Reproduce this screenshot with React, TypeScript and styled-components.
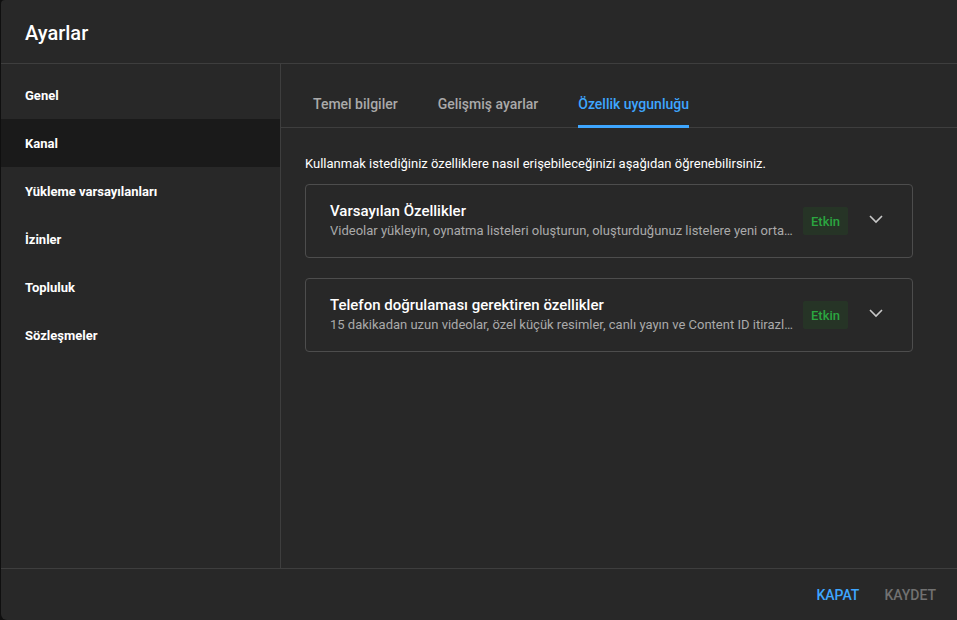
import React, { useState } from "react";
import styled, { createGlobalStyle } from "styled-components";

const GlobalStyle = createGlobalStyle`
  html, body {
    margin: 0;
    padding: 0;
    background: #0f0f0f;
    font-family: Roboto, "Noto Sans", Arial, sans-serif;
  }
  #root {
    height: 620px;
    overflow: hidden;
  }
`;

const Dialog = styled.div`
  margin-left: 1px;
  height: 620px;
  background: #282828;
  border-radius: 4px 0 0 6px;
  display: flex;
  flex-direction: column;
  color: #f1f1f1;
`;

const Header = styled.div`
  height: 61px;
  flex-shrink: 0;
  border-bottom: 1px solid #3e3e3e;
  display: flex;
  align-items: center;
  padding: 2px 24px 0;
  h1 {
    margin: 0;
    font-size: 20px;
    font-weight: 500;
    color: #fff;
  }
`;

const Body = styled.div`
  flex: 1;
  display: flex;
  min-height: 0;
`;

const Sidebar = styled.nav`
  width: 279px;
  flex-shrink: 0;
  border-right: 1px solid #3e3e3e;
  padding-top: 7px;
`;

const NavItem = styled.div<{ $active?: boolean }>`
  height: 48px;
  display: flex;
  align-items: center;
  padding-left: 24px;
  font-size: 13px;
  font-weight: 700;
  color: #fff;
  background: ${(p) => (p.$active ? "#1a1a1a" : "transparent")};
  cursor: pointer;
`;

const Main = styled.div`
  flex: 1;
  min-width: 0;
  display: flex;
  flex-direction: column;
`;

const Tabs = styled.div`
  height: 63px;
  border-bottom: 1px solid #3e3e3e;
  display: flex;
  gap: 40px;
  padding-left: 32px;
`;

const Tab = styled.div<{ $active?: boolean }>`
  display: flex;
  align-items: center;
  padding-top: 18px;
  font-size: 14px;
  font-weight: 500;
  color: ${(p) => (p.$active ? "#3ea6ff" : "#aaaaaa")};
  border-bottom: 3px solid ${(p) => (p.$active ? "#3ea6ff" : "transparent")};
  margin-bottom: -1px;
  cursor: pointer;
`;

const Content = styled.div`
  padding: 27px 44px 0 24px;
  display: flex;
  flex-direction: column;
  gap: 20px;
`;

const Intro = styled.p`
  margin: 0 0 -9px;
  font-size: 13px;
  font-weight: 400;
  color: #fff;
  line-height: 18px;
`;

const Card = styled.div`
  height: 72px;
  border: 1px solid #4d4d4d;
  border-radius: 4px;
  display: flex;
  align-items: center;
  padding-left: 24px;
  padding-right: 16px;
`;

const CardText = styled.div`
  flex: 1;
  min-width: 0;
  margin-right: 10px;
  display: flex;
  flex-direction: column;
  gap: 1px;
  margin-top: -1px;
`;

const CardTitle = styled.div`
  font-size: 15px;
  font-weight: 500;
  color: #fff;
  line-height: 20px;
`;

const CardSub = styled.div`
  font-size: 13px;
  color: #aaaaaa;
  line-height: 18px;
  white-space: nowrap;
  overflow: hidden;
  text-overflow: ellipsis;
`;

const Badge = styled.div`
  width: 45px;
  height: 28px;
  display: flex;
  align-items: center;
  justify-content: center;
  background: #263426;
  color: #2ba640;
  font-size: 13px;
  font-weight: 500;
  border-radius: 2px;
`;

const Chevron = styled.button`
  width: 40px;
  height: 40px;
  margin-left: 8px;
  border: none;
  background: none;
  padding: 0;
  display: flex;
  align-items: center;
  justify-content: center;
  color: #c8c8c8;
  cursor: pointer;
  margin-top: -5px;
`;

const Footer = styled.div`
  height: 51px;
  flex-shrink: 0;
  border-top: 1px solid #3e3e3e;
  display: flex;
  align-items: center;
  justify-content: flex-end;
  gap: 25px;
  padding-right: 21px;
`;

const FooterButton = styled.button<{ $primary?: boolean }>`
  border: none;
  background: none;
  padding: 0;
  font-family: inherit;
  font-size: 14px;
  font-weight: 500;
  text-transform: uppercase;
  color: ${(p) => (p.$primary ? "#3ea6ff" : "#717171")};
  cursor: pointer;
  margin-top: 1px;
`;

const navItems = [
  "Genel",
  "Kanal",
  "Yükleme varsayılanları",
  "İzinler",
  "Topluluk",
  "Sözleşmeler",
];

const tabs = ["Temel bilgiler", "Gelişmiş ayarlar", "Özellik uygunluğu"];

const features = [
  {
    title: "Varsayılan Özellikler",
    sub: "Videolar yükleyin, oynatma listeleri oluşturun, oluşturduğunuz listelere yeni ortam ekleyin ve daha fazlası",
  },
  {
    title: "Telefon doğrulaması gerektiren özellikler",
    sub: "15 dakikadan uzun videolar, özel küçük resimler, canlı yayın ve Content ID itirazları",
  },
];

export default function App() {
  const [nav, setNav] = useState(1);
  const [tab, setTab] = useState(2);

  return (
    <>
      <GlobalStyle />
      <Dialog>
        <Header>
          <h1>Ayarlar</h1>
        </Header>
        <Body>
          <Sidebar>
            {navItems.map((n, i) => (
              <NavItem key={n} $active={i === nav} onClick={() => setNav(i)}>
                {n}
              </NavItem>
            ))}
          </Sidebar>
          <Main>
            <Tabs>
              {tabs.map((t, i) => (
                <Tab key={t} $active={i === tab} onClick={() => setTab(i)}>
                  {t}
                </Tab>
              ))}
            </Tabs>
            <Content>
              <Intro>
                Kullanmak istediğiniz özelliklere nasıl erişebileceğinizi aşağıdan öğrenebilirsiniz.
              </Intro>
              {features.map((f) => (
                <Card key={f.title}>
                  <CardText>
                    <CardTitle>{f.title}</CardTitle>
                    <CardSub>{f.sub}</CardSub>
                  </CardText>
                  <Badge>Etkin</Badge>
                  <Chevron>
                    <svg width="24" height="24" viewBox="0 0 24 24" fill="none">
                      <path d="M6 9l6 6 6-6" stroke="currentColor" strokeWidth="1.6" />
                    </svg>
                  </Chevron>
                </Card>
              ))}
            </Content>
          </Main>
        </Body>
        <Footer>
          <FooterButton $primary>Kapat</FooterButton>
          <FooterButton>Kaydet</FooterButton>
        </Footer>
      </Dialog>
    </>
  );
}
